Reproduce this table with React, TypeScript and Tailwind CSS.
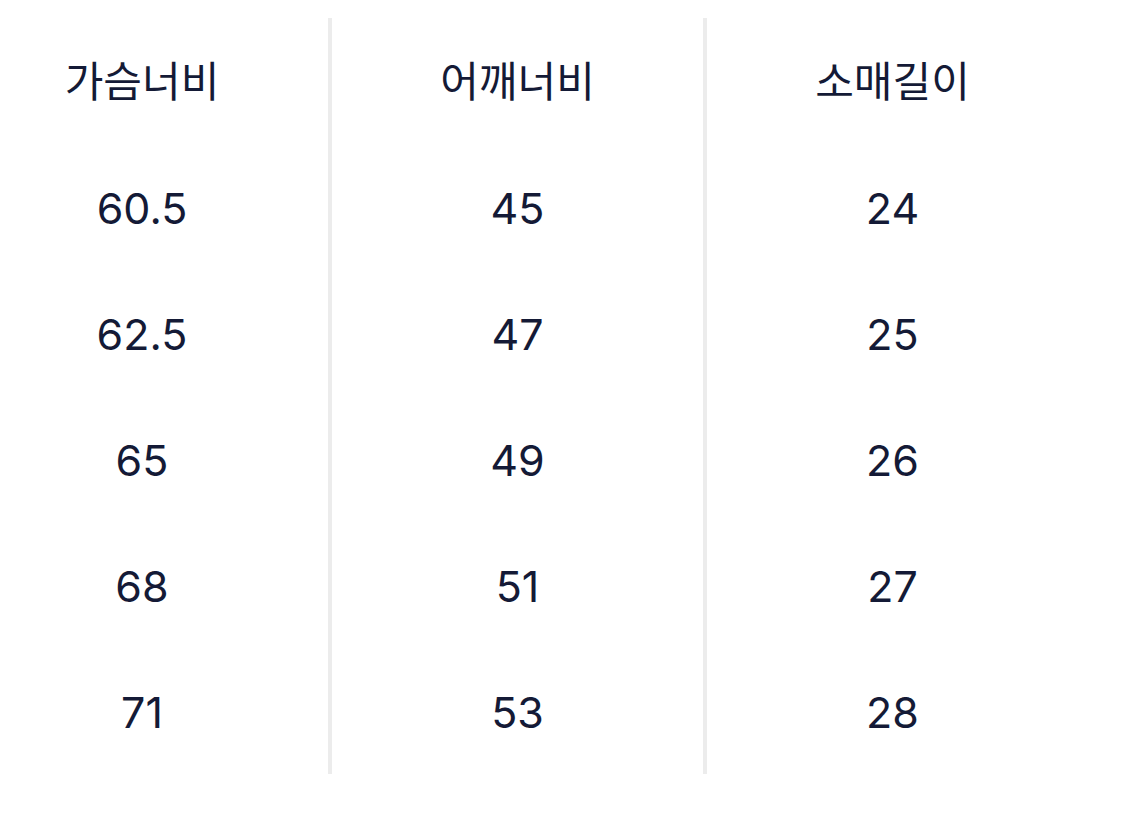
const columns = [
  { title: "가슴너비", values: ["60.5", "62.5", "65", "68", "71"] },
  { title: "어깨너비", values: ["45", "47", "49", "51", "53"] },
  { title: "소매길이", values: ["24", "25", "26", "27", "28"] },
];

export default function App() {
  return (
    <div
      className="w-[1125px] h-[829px] bg-white pt-[18px] text-[#141a36] overflow-hidden"
      style={{ fontFamily: 'Inter, "Noto Sans CJK KR", sans-serif' }}
    >
      <div className="flex">
        {columns.map((col, i) => (
          <div
            key={col.title}
            className={
              i === 0
                ? "w-[328px] pr-[44px] flex flex-col"
                : "w-[375px] border-l-4 border-[#ececec] flex flex-col"
            }
          >
            <div className="h-[126px] flex items-center justify-center text-[42px] leading-none pt-[2px]">
              {col.title}
            </div>
            {col.values.map((v, j) => (
              <div
                key={j}
                className="h-[126px] flex items-center justify-center text-[43px] leading-none pt-[3px]"
              >
                {v}
              </div>
            ))}
          </div>
        ))}
      </div>
    </div>
  );
}
